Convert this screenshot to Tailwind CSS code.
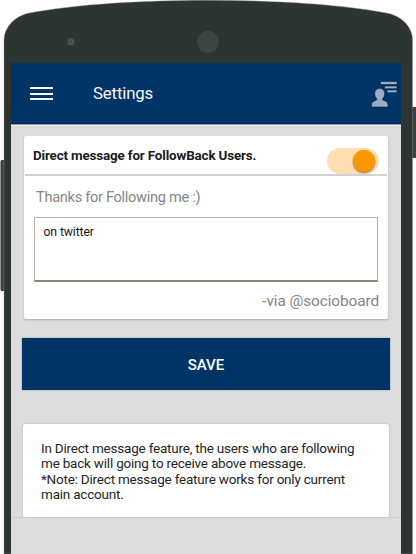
<!DOCTYPE html>
<html lang="en">
<head>
<meta charset="utf-8">
<title>Settings</title>
<script src="https://cdn.jsdelivr.net/npm/@tailwindcss/browser@4"></script>
</head>
<body class="bg-white font-['Roboto',sans-serif]">
<div class="relative w-[416px] h-[554px] overflow-hidden">
  <!-- phone shell -->
  <svg class="absolute inset-0" width="416" height="554" viewBox="0 0 416 554" aria-hidden="true">
    <rect x="1" y="160" width="5" height="131" fill="#3a4442"/>
    <rect x="0" y="161" width="1" height="129" fill="#929796"/>
    <rect x="411" y="107" width="5" height="51" fill="#3a4442"/>
    <path d="M4 554V40C4 28 14 17 27 13.500C75 4 145 0.300 208 0.300S341 4 389 13.500C403 17 412.500 28 412.500 40V554Z" fill="#2d3533" stroke="#8b918f" stroke-width=".4"/>
    <circle cx="71" cy="41.700" r="4" fill="#414a48"/>
    <circle cx="71" cy="41.700" r="1.800" fill="#3a4341" stroke="#56605d" stroke-width="1"/>
    <circle cx="208" cy="41.700" r="11" fill="#3c4543"/>
  </svg>
  <main class="relative ml-[11px] mt-[63px] w-[390px] h-[491px] bg-[#dcdcdc] flex flex-col">
    <header class="h-[61px] shrink-0 bg-[#003366] flex items-center pl-[19px] pr-[3px] border-b border-[#00285a] shadow-[0_1px_0_#8c9cae,0_2px_0_#eeeeee]">
      <button class="mt-px w-[23px] h-[13px] flex flex-col justify-between" aria-label="Menu">
        <span class="w-full h-[2px] bg-[#f8fafc]"></span><span class="w-full h-[2px] bg-[#f8fafc]"></span><span class="w-full h-[2px] bg-[#f8fafc]"></span>
      </button>
      <h1 class="ml-[40px] text-[16.800px] tracking-[-0.15px] leading-5 text-[#f5f8fb]">Settings</h1>
      <svg class="ml-auto mt-px" width="27" height="28" viewBox="0 0 27 28" fill="#9aadc3" stroke="#00234e" stroke-width=".6" aria-hidden="true">
        <path d="M9.500 1.500h16.500v3H9.500zM13.500 6H26v2.700H13.500zM16 10h10v2.700H16z"/>
        <path d="M8.700 8.500c3.400 0 5 2.300 5 5 0 2.200-.9 4.200-2 5.200v1.200c2.500 1.100 5.200 2 5.200 4.500V27H.5v-2.600c0-2.500 2.700-3.400 5.200-4.500v-1.200c-1.100-1-2-3-2-5.200 0-2.700 1.600-5 5-5Z"/>
      </svg>
    </header>

    <section class="ml-[13px] mt-[12px] w-[364px] h-[183px] shrink-0 bg-white rounded-[2px] shadow-[0_1px_2px_#aaa] flex flex-col">
      <div class="h-[40px] mx-px shrink-0 border-b-2 border-[#d2d2d2] flex pl-[8px] pr-[8px]">
        <h2 class="mt-[10px] text-[13.400px] tracking-[-0.15px] leading-5 font-bold text-[#1b1b1b] whitespace-nowrap">Direct message for FollowBack Users.</h2>
        <button class="ml-auto mt-[12px] w-[52px] h-[26px] rounded-full bg-[#ffdfb2] flex justify-end items-center pr-[4px]" aria-label="Direct message toggle">
          <span class="size-[22px] rounded-full bg-[#fb9600] shadow-[0_1px_2px_#8b7048]"></span>
        </button>
      </div>
      <p class="ml-[12px] mt-[11px] text-[14.600px] tracking-[-0.3px] leading-5 text-[#858585] whitespace-nowrap">Thanks for Following me :)</p>
      <div class="ml-[10px] mt-[10px] w-[344px] h-[65px] shrink-0 border border-[#b9b2a6] border-b-2 border-b-[#858572] pl-[8.500px] pt-[4px] text-[12.200px] tracking-[-0.1px] leading-5 text-[#161616]">on twitter</div>
      <p class="mr-[9px] mt-[9px] text-right text-[15.400px] tracking-[-0.1px] leading-5 text-[#858585]">-via @socioboard</p>
    </section>

    <button class="ml-[11px] mt-[19px] w-[368px] h-[52px] shrink-0 bg-[#003366] shadow-[0_0_1px_#405e7d] text-center text-[15px] font-medium text-white pt-[3px]">SAVE</button>

    <section class="ml-[12px] mt-[34px] w-[366px] h-[93px] shrink-0 bg-white rounded-[2px] shadow-[0_0_2px_#aaa] pl-[18px] pt-[17px] text-[13.500px] tracking-[-0.21px] leading-[15.300px] text-[#252525] whitespace-nowrap">
      <p>In Direct message feature, the users who are following<br>me back will going to receive above message.<br>*Note: Direct message feature works for only current<br>main account.</p>
    </section>
    <footer class="relative flex-1 bg-[#dcdcdc] border-t border-[#cecece]"></footer>
  </main>
</div>
</body>
</html>
